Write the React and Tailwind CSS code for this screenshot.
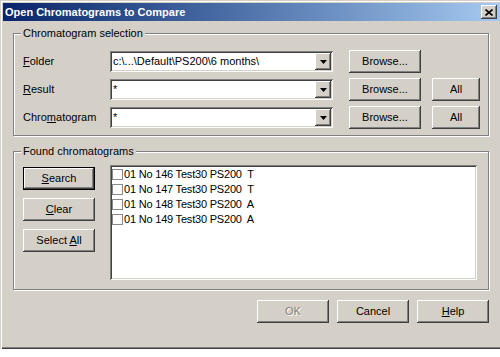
import React from 'react';

const raised =
  'bg-[#d4d0c8] shadow-[inset_-1px_-1px_#404040,inset_1px_1px_#ffffff,inset_-2px_-2px_#808080,inset_2px_2px_#d4d0c8]';
const sunken =
  'shadow-[inset_1px_1px_#808080,inset_-1px_-1px_#ffffff,inset_2px_2px_#404040,inset_-2px_-2px_#d4d0c8]';

const Btn = ({ children, width = 'w-[72px]', isDefault, disabled }) => (
  <div className={`${width} h-[23px] shrink-0 ${isDefault ? 'border border-black' : ''}`}>
    <div
      className={`w-full h-full flex items-center justify-center text-[11px] ${raised} ${
        disabled ? 'text-[#808080] [text-shadow:1px_1px_0_#ffffff]' : 'text-black'
      }`}
    >
      {children}
    </div>
  </div>
);

const Combo = ({ value }) => (
  <div className={`w-[223px] h-[21px] bg-white flex items-center ${sunken}`}>
    <span className="flex-1 pl-[3px] text-[11px] leading-none truncate">{value}</span>
    <div className={`w-[16px] h-[17px] mr-[2px] flex items-center justify-center ${raised}`}>
      <svg width="7" height="4" viewBox="0 0 7 4">
        <path d="M0 0h7L3.5 4z" fill="#000" />
      </svg>
    </div>
  </div>
);

const Group = ({ title, className, children }) => (
  <div
    className={`relative ml-[10px] w-[476px] border border-[#808080] shadow-[inset_1px_1px_#ffffff,1px_1px_#ffffff] ${className}`}
  >
    <span className="absolute -top-[8px] left-[7px] px-[2px] bg-[#d4d0c8] text-[11px] leading-[14px]">
      {title}
    </span>
    {children}
  </div>
);

const Row = ({ label, value, all }) => (
  <div className="h-[23px] flex items-center">
    <span className="w-[87px] text-[11px]">{label}</span>
    <Combo value={value} />
    <div className="ml-[16px]">
      <Btn>Browse...</Btn>
    </div>
    {all && (
      <div className="ml-[11px]">
        <Btn width="w-[48px]">All</Btn>
      </div>
    )}
  </div>
);

const items = [
  '01 No 146 Test30 PS200  T',
  '01 No 147 Test30 PS200  T',
  '01 No 148 Test30 PS200  A',
  '01 No 149 Test30 PS200  A',
];

export default function App() {
  return (
    <div className="w-[500px] h-[357px] bg-white overflow-hidden font-['Liberation_Sans',Arial,sans-serif] text-black">
      <div className="w-[503px] h-[349px] bg-[#d4d0c8] pl-[3px] pt-[3px] shadow-[inset_1px_1px_#d4d0c8,inset_2px_2px_#ffffff,inset_0_-1px_#404040,inset_0_-2px_#808080]">
        {/* title bar */}
        <div className="w-[497px] h-[18px] bg-linear-to-r from-[#0a246a] to-[#a6caf0] flex items-center pl-[2px]">
          <span className="text-white font-bold text-[11px] flex-1 whitespace-pre">Open Chromatograms to Compare</span>
          <div className={`w-[16px] h-[14px] mr-[3px] flex items-center justify-center ${raised}`}>
            <svg width="8" height="7" viewBox="0 0 8 7">
              <path d="M0.5 0.5l7 6M7.5 0.5l-7 6" stroke="#000" strokeWidth="1.6" />
            </svg>
          </div>
        </div>

        <Group title="Chromatogram selection" className="mt-[12px] pt-[16px] pb-[6px] pl-[9px]">
          <div className="flex flex-col gap-[5px]">
            <Row label={<><u>F</u>older</>} value="c:\...\Default\PS200\6 months\" />
            <Row label={<><u>R</u>esult</>} value="*" all />
            <Row label={<>Chro<u>m</u>atogram</>} value="*" all />
          </div>
        </Group>

        <Group title="Found chromatograms" className="mt-[15px] pt-[13px] pb-[9px] pl-[9px]">
          <div className="flex">
            <div className="flex flex-col gap-[8px] pt-[2px]">
              <Btn isDefault><span><u>S</u>earch</span></Btn>
              <Btn><span><u>C</u>lear</span></Btn>
              <Btn><span>Select <u>A</u>ll</span></Btn>
            </div>
            <div className={`ml-[15px] w-[367px] h-[115px] bg-white p-[2px] ${sunken}`}>
              {items.map((t) => (
                <div key={t} className="h-[15px] flex items-center text-[11px] tracking-[-0.2px] whitespace-pre">
                  <span className="w-[11px] h-[11px] border border-[#8a8a8a] bg-white mr-[1px] shrink-0" />
                  {t}
                </div>
              ))}
            </div>
          </div>
        </Group>

        <div className="mt-[10px] ml-[254px] flex gap-[8px]">
          <Btn disabled>OK</Btn>
          <Btn>Cancel</Btn>
          <Btn><span><u>H</u>elp</span></Btn>
        </div>
      </div>
    </div>
  );
}
